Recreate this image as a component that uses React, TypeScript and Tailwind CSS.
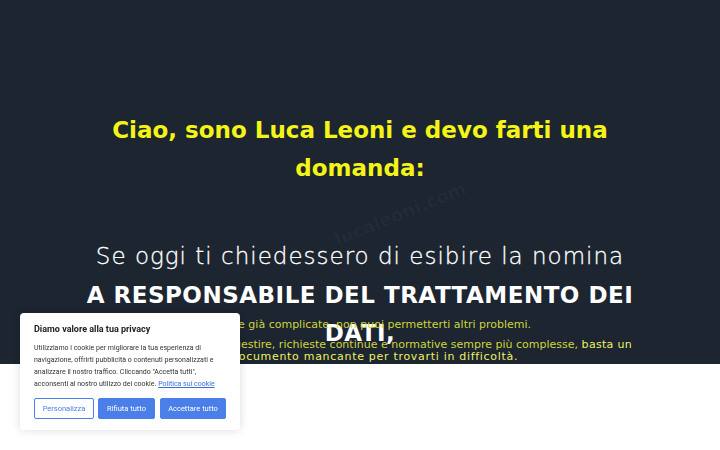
export default function App() {
  return (
    <div className="relative w-full h-[450px] overflow-hidden bg-white font-['DejaVu_Sans',sans-serif]">
      <section className="relative h-[364px] bg-[#1c2530] flex flex-col items-center">
        {/* faint watermark */}
        <div className="absolute left-[330px] top-[200px] -rotate-[22deg] text-[18px] font-semibold text-white/[0.03] select-none">
          lucaleoni.com
        </div>

        <h1 className="pt-[111px] text-center text-[23px] leading-[38px] font-bold text-[#f4f516]">
          Ciao, sono Luca Leoni e devo farti una
          <br />
          domanda:
        </h1>

        <h2 className="mt-[50px] -mb-[35px] text-center text-[23px] leading-[38.5px] text-white">
          <span className="font-extralight tracking-[1px] [-webkit-text-stroke:0.3px_white]">
            Se oggi ti chiedessero di esibire la nomina
          </span>
          <br />
          <span className="font-bold tracking-[0.5px]">A RESPONSABILE DEL TRATTAMENTO DEI</span>
          <br />
          <span className="font-bold tracking-[0.5px]">DATI,</span>
        </h2>

        <p className="relative text-center text-[11px] leading-[13px] text-[#cfd43c] whitespace-nowrap">
          Con le ore già complicate, non puoi permetterti altri problemi.
        </p>
        <p className="relative mt-[8px] text-center text-[11px] leading-[12px] text-[#cfd43c] whitespace-nowrap">
          Tra le scadenze, clienti da gestire, richieste continue e normative sempre più complesse,{' '}
          <span className="text-[#eef163] tracking-[0.3px]">basta un</span>
          <br />
          <span className="text-[#eef163] tracking-[0.7px]">solo documento mancante per trovarti in difficoltà.</span>
        </p>
      </section>

      {/* cookie banner */}
      <div className="fixed left-[20px] top-[313px] w-[220px] h-[117px] bg-white rounded-[4px] shadow-[0_0_10px_rgba(0,0,0,0.14)] px-[14px] pt-[10px] font-['Roboto',sans-serif]">
        <div className="text-[9px] leading-[12px] font-bold text-[#212121] whitespace-nowrap">
          Diamo valore alla tua privacy
        </div>
        <p className="mt-[7px] text-[7px] leading-[12px] text-[#333333] whitespace-nowrap">
          Utilizziamo i cookie per migliorare la tua esperienza di
          <br />
          navigazione, offrirti pubblicità o contenuti personalizzati e
          <br />
          analizzare il nostro traffico. Cliccando "Accetta tutti",
          <br />
          acconsenti al nostro utilizzo dei cookie.{' '}
          <span className="text-[#3a70dc] underline">Politica sui cookie</span>
        </p>
        <div className="mt-[8px] flex gap-[4px] text-[7.5px]">
          <button className="w-[60px] h-[21px] border border-[#4a7ee8] text-[#4a7ee8] rounded-[2px] bg-white">
            Personalizza
          </button>
          <button className="w-[57px] h-[21px] bg-[#4a7ee8] border border-[#4a7ee8] text-white rounded-[2px]">
            Rifiuta tutto
          </button>
          <button className="ml-[1px] w-[66px] h-[21px] bg-[#4a7ee8] border border-[#4a7ee8] text-white rounded-[2px]">
            Accettare tutto
          </button>
        </div>
      </div>
    </div>
  );
}
